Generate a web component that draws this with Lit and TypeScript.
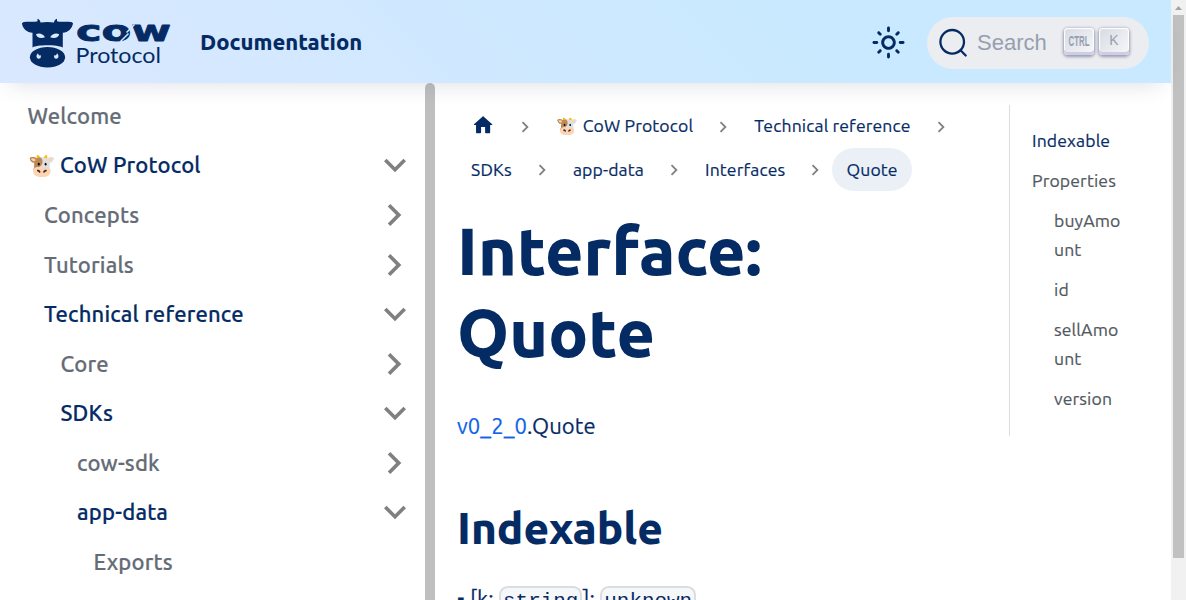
import { LitElement, html, css } from "lit";
import { customElement } from "lit/decorators.js";
import { classMap } from "lit/directives/class-map.js";

type MenuItem = { label: string; depth: number; active?: boolean; arrow?: "right" | "down" };

const MENU: MenuItem[] = [
  { label: "Welcome", depth: 0 },
  { label: "🐮 CoW Protocol", depth: 0, active: true, arrow: "down" },
  { label: "Concepts", depth: 1, arrow: "right" },
  { label: "Tutorials", depth: 1, arrow: "right" },
  { label: "Technical reference", depth: 1, active: true, arrow: "down" },
  { label: "Core", depth: 2, arrow: "right" },
  { label: "SDKs", depth: 2, active: true, arrow: "down" },
  { label: "cow-sdk", depth: 3, arrow: "right" },
  { label: "app-data", depth: 3, active: true, arrow: "down" },
  { label: "Exports", depth: 4 },
];

const CRUMBS = ["🐮 CoW Protocol", "Technical reference", "SDKs", "app-data", "Interfaces", "Quote"];

const chevron = (cls: string) => html`<svg class=${cls} viewBox="0 0 24 24">
  <path d="M8.59 16.59 13.17 12 8.59 7.41 10 6l6 6-6 6z" fill="currentColor" />
</svg>`;

@customElement("docs-navbar")
export class DocsNavbar extends LitElement {
  static styles = css`
    :host { display: flex; align-items: center; box-sizing: border-box; height: 83px; padding: 2px 22px 0;
      background: linear-gradient(45deg, #dae8ff, #c8e9ff 70%); box-shadow: 0 11px 22px -10px rgba(40, 50, 90, 0.16); }
    .logo { width: 150px; height: 50px; margin-right: 28px; overflow: visible; }
    .mark { font: 700 27.5px "DejaVu Sans", sans-serif; stroke: #052b65; stroke-width: 0.8; stroke-linejoin: round; }
    .word { font: 400 20.8px Lato, sans-serif; }
    .title { font-weight: 800; font-size: 22px; flex: 1; padding-bottom: 2px; }
    .sun { width: 35px; height: 35px; margin-right: 21px; }
    .search { display: flex; align-items: center; box-sizing: border-box; width: 222px; height: 52px; border-radius: 26px;
      background: #ebedf0; padding: 0 20px 0 11px; font: 22px/27px "Liberation Sans", Arial, sans-serif; color: #969faf; }
    .glass { width: 30px; height: 30px; margin-right: 9px; color: #052b65; }
    .label { flex: 1; }
    .key { display: flex; align-items: center; justify-content: center; box-sizing: border-box; width: 30px; height: 27px;
      margin: 0 0 2px 5px; padding-bottom: 3px; border-radius: 4px; color: #969faf; font-size: 14px;
      background: linear-gradient(-225deg, #d5dbe4, #f8f8f8);
      box-shadow: inset 0 -3px 0 0 #cdcde6, inset 0 0 1px 1px #fff, 0 1px 3px 1px rgba(30, 35, 90, 0.4); }
    .ctrl { width: 22px; height: 14px; overflow: visible; }
    .ctrltext { font: 700 15.5px "Liberation Sans", Arial, sans-serif; }
  `;
  render() {
    return html`
      <svg class="logo" viewBox="22 18 150 50" fill="#052b65">
        <path d="M22 23.600C22 21 31 22 35 21.800c1.200-.2 2-.3 2.500-.5L37.500 18.800c1.500.3 2.800 1.800 3 3.700 4-.7 9.500-.7 13.500 0 .2-1.900 1.500-3.400 3-3.700l0 2.500c.5.200 1.300.4 2.500.5 4 .2 13.500-1 13.500 1.800-.8 5-5 9.100-10.200 9.100V47.500C58 44.500 36 44.500 32.500 47.500V32.700C27 32.700 22.500 28.600 22 23.600Z" />
        <path d="M36 34.300c2.500-1.600 7-1 9 3-4 1.500-8.500.5-9-3ZM59.200 34.300c-2.500-1.600-7-1-9 3 4 1.500 8.500.5 9-3Z" fill="#dbe8fd" />
        <ellipse cx="47.500" cy="57.300" rx="17.600" ry="10.200" />
        <path d="M38 53.300c-2.200 1.800-2 5.600 1 5.400 2 0 2.400-2.500 1.400-3.700-.6.9-2 .3-2.400-1.700ZM57 53.300c2.200 1.800 2 5.600-1 5.400-2 0-2.400-2.500-1.400-3.700.6.9 2 .3 2.400-1.700Z" fill="#dbe8fd" />
        <text class="mark" x="76" y="40.700" textLength="95" lengthAdjust="spacingAndGlyphs">cow</text>
        <path d="m134.500 24.500-8 8M128.500 33.500l-8 8" stroke="#d9e8ff" stroke-width="1.500" fill="none" />
        <text class="word" x="75.500" y="62.600" textLength="85.500" lengthAdjust="spacingAndGlyphs">Protocol</text>
      </svg>
      <span class="title">Documentation</span>
      <svg class="sun" viewBox="0 0 24 24" fill="#052b65">
        <path d="M12,9c1.650,0,3,1.350,3,3s-1.350,3-3,3s-3-1.350-3-3S10.350,9,12,9 M12,7c-2.760,0-5,2.240-5,5s2.240,5,5,5s5-2.240,5-5 S14.760,7,12,7L12,7z M2,13l2,0c0.550,0,1-0.450,1-1s-0.450-1-1-1l-2,0c-0.550,0-1,0.450-1,1S1.450,13,2,13z M20,13l2,0c0.550,0,1-0.450,1-1 s-0.450-1-1-1l-2,0c-0.550,0-1,0.450-1,1S19.450,13,20,13z M11,2v2c0,0.550,0.450,1,1,1s1-0.450,1-1V2c0-0.550-0.450-1-1-1S11,1.450,11,2z M11,20v2c0,0.550,0.450,1,1,1s1-0.450,1-1v-2c0-0.550-0.450-1-1-1C11.450,19,11,19.450,11,20z M5.990,4.580c-0.390-0.390-1.030-0.390-1.410,0 c-0.390,0.390-0.390,1.030,0,1.410l1.060,1.060c0.390,0.390,1.030,0.390,1.410,0s0.390-1.030,0-1.410L5.990,4.580z M18.360,16.950 c-0.390-0.390-1.030-0.390-1.410,0c-0.390,0.390-0.390,1.030,0,1.410l1.060,1.060c0.390,0.390,1.030,0.390,1.410,0c0.390-0.390,0.390-1.030,0-1.410 L18.360,16.950z M19.420,5.990c0.390-0.390,0.390-1.030,0-1.410c-0.390-0.390-1.030-0.390-1.410,0l-1.060,1.060c-0.390,0.390-0.390,1.030,0,1.410 s1.030,0.390,1.410,0L19.420,5.990z M7.050,18.360c0.390-0.390,0.390-1.030,0-1.410c-0.390-0.390-1.030-0.390-1.410,0l-1.060,1.060 c-0.390,0.390-0.390,1.030,0,1.410s1.030,0.390,1.410,0L7.050,18.360z" />
      </svg>
      <div class="search">
        <svg class="glass" viewBox="0 0 30 30" fill="none" stroke="currentColor" stroke-width="2.300" stroke-linecap="round">
          <circle cx="14.200" cy="13.800" r="11.800" /><path d="m22.500 22.300 5.200 5.200" />
        </svg>
        <span class="label">Search</span>
        <span class="key"><svg class="ctrl" viewBox="0 0 22 14" fill="currentColor">
          <text class="ctrltext" x="0.500" y="12.500" textLength="21" lengthAdjust="spacingAndGlyphs">CTRL</text></svg></span>
        <span class="key">K</span>
      </div>`;
  }
}

@customElement("docs-sidebar")
export class DocsSidebar extends LitElement {
  static styles = css`
    :host { display: flex; width: 435px; overflow: hidden; box-sizing: border-box; }
    .menu { flex: 1; padding: 11px; }
    .item { display: flex; align-items: center; justify-content: space-between; box-sizing: border-box; height: 44px;
      margin-bottom: 5.5px; font-size: 22px; font-weight: 500; letter-spacing: 0.17px; color: #656c76;
      -webkit-text-stroke: 0.2px currentColor; }
    .item span { padding-bottom: 0.7px; }
    .active { color: #052b65; }
    .arrow { width: 44px; height: 44px; color: #808080; margin-right: -2.5px; }
    .right { margin-right: -2px; }
    .down { transform: rotate(90deg); margin-bottom: 1px; }
    .d0 { padding-left: 16.5px; } .d1 { padding-left: 33px; } .d2 { padding-left: 49.5px; }
    .d3 { padding-left: 66px; } .d4 { padding-left: 82.5px; }
    .thumb { width: 10px; border-radius: 5px 5px 0 0; background: #bfbfbf; }
  `;
  render() {
    return html`<div class="menu">
        ${MENU.map((m) => html`<div class=${classMap({ item: true, active: !!m.active, [`d${m.depth}`]: true })}>
          <span>${m.label}</span>${m.arrow ? chevron(`arrow ${m.arrow}`) : ""}
        </div>`)}
      </div><div class="thumb"></div>`;
  }
}

@customElement("docs-article")
export class DocsArticle extends LitElement {
  static styles = css`
    :host { display: block; box-sizing: border-box; width: 552px; padding: 22px; }
    .crumbs { display: flex; flex-wrap: wrap; margin-bottom: 17.6px; font-size: 17.6px; line-height: 29px;
      letter-spacing: 0.12px; -webkit-text-stroke: 0.2px currentColor; }
    .crumb { display: flex; align-items: center; }
    .link { display: block; padding: 6.4px 14.08px 7.6px; border-radius: 44px; }
    .current { background: #ebf0f7; }
    .home { display: block; width: 24.2px; height: 24.2px; margin: 1.6px 0 3.4px; }
    .sep { width: 22px; height: 22px; margin: 1px 6px 0 5px; color: #808080; }
    h1 { margin: 0 0 34.2px; font-size: 66px; line-height: 82.5px; font-weight: 800; letter-spacing: 0.08px; }
    p { margin: 0 0 27.5px; font-size: 22px; line-height: 36.3px; letter-spacing: 0.08px; -webkit-text-stroke: 0.2px currentColor; }
    .ref { color: #0c62ea; }
    h2 { margin: 56px 0 25.5px; font-size: 44px; line-height: 55px; font-weight: 800; }
    code { font: 20.9px "Liberation Mono", monospace; background: #f6f7f8; border: 2px solid #dadde1;
      border-radius: 8.8px; padding: 2.2px; letter-spacing: 0; -webkit-text-stroke: 0; }
  `;
  render() {
    return html`
      <nav class="crumbs">
        <span class="crumb"><span class="link"><svg class="home" viewBox="0 0 24 24">
          <path d="M10 19v-5h4v5c0 .55.45 1 1 1h3c.55 0 1-.45 1-1v-7h1.700c.46 0 .68-.57.33-.87L12.670 3.600c-.38-.34-.96-.34-1.340 0l-8.360 7.530c-.34.3-.13.87.33.87H5v7c0 .55.45 1 1 1h3c.55 0 1-.45 1-1z" fill="currentColor" />
        </svg></span>${chevron("sep")}</span>
        ${CRUMBS.map((c, i) => i < CRUMBS.length - 1
          ? html`<span class="crumb"><span class="link">${c}</span>${chevron("sep")}</span>`
          : html`<span class="crumb"><span class="link current">${c}</span></span>`)}
      </nav>
      <h1>Interface: Quote</h1>
      <p><span class="ref">v0_2_0</span>.Quote</p>
      <h2>Indexable</h2>
      <p>▪ [k: <code>string</code>]: <code>unknown</code></p>`;
  }
}

@customElement("docs-toc")
export class DocsToc extends LitElement {
  static styles = css`
    :host { display: block; box-sizing: border-box; width: 184px; padding: 22px 22px 0; }
    .box { border-left: 1px solid #dadde1; padding: 10px 0 12.3px; font-size: 17.6px; line-height: 29px; color: #525860;
      display: flow-root; letter-spacing: 0.13px; -webkit-text-stroke: 0.2px currentColor; }
    ul { list-style: none; margin: 0; padding: 0 0 0 11px; }
    .box > ul { display: flow-root; }
    li { margin: 11px; overflow-wrap: anywhere; }
    .active { color: #052b65; }
  `;
  render() {
    return html`<div class="box"><ul>
      <li class="active">Indexable</li>
      <li>Properties
        <ul>${["buyAmount", "id", "sellAmount", "version"].map((t) => html`<li>${t}</li>`)}</ul>
      </li>
    </ul></div>`;
  }
}

@customElement("app-root")
export class AppRoot extends LitElement {
  static styles = css`
    :host { display: flex; height: 600px; overflow: hidden; background: #fff; color: #052b65;
      font-family: Ubuntu, "Noto Sans", sans-serif; }
    .page { display: flex; flex-direction: column; width: 1171px; }
    docs-navbar { flex: none; z-index: 1; }
    .body { display: flex; flex: 1; min-height: 0; overflow: hidden; }
    .scroll { flex: 1; background: #f1f1f1; display: flex; flex-direction: column; align-items: center; }
    .up { width: 15px; height: 15px; flex: none; }
    .thumb { width: 11px; height: 543px; background: #c1c1c1; }
  `;
  render() {
    return html`
      <div class="page">
        <docs-navbar></docs-navbar>
        <div class="body"><docs-sidebar></docs-sidebar><docs-article></docs-article><docs-toc></docs-toc></div>
      </div>
      <div class="scroll">
        <svg class="up" viewBox="0 0 15 15"><path d="M4 10h7L7.500 6z" fill="#a3a3a3" /></svg>
        <div class="thumb"></div>
      </div>`;
  }
}
